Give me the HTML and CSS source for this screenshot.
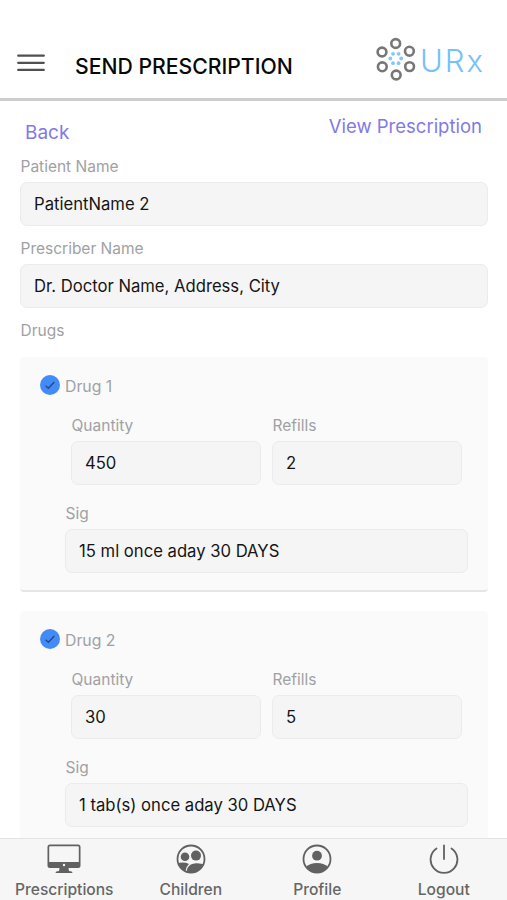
FILE: index.html
```
<!DOCTYPE html>
<html lang="en">
<head>
<meta charset="utf-8">
<title>Send Prescription</title>
<link rel="stylesheet" href="styles.css">
</head>
<body>
<div class="app">
  <header class="header">
    <svg class="menu" viewBox="0 0 28 20"><path d="M1.2 1.7h25.6M1.2 8.8h25.6M1.2 15.9h25.6"/></svg>
    <h1 class="title">SEND PRESCRIPTION</h1>
    <div class="brand">
      <svg class="logo" viewBox="0 0 40 44">
        <g class="outer"><circle cx="19.7" cy="6.5" r="4.4"/><circle cx="33.4" cy="14.2" r="4.4"/><circle cx="33.6" cy="29.6" r="4.4"/><circle cx="20.2" cy="38" r="4.4"/><circle cx="6.3" cy="29.8" r="4.4"/><circle cx="6" cy="15" r="4.4"/></g>
        <g class="inner"><circle cx="17" cy="16.8" r="1.9"/><circle cx="22.6" cy="16.8" r="1.9"/><circle cx="25.2" cy="21.5" r="1.9"/><circle cx="22.6" cy="26.2" r="1.9"/><circle cx="17" cy="26.2" r="1.9"/><circle cx="14.3" cy="21.5" r="1.9"/></g>
      </svg>
      <span class="brand-name">URx</span>
    </div>
  </header>
  <main class="content">
    <nav class="links"><a class="back">Back</a><a class="view">View Prescription</a></nav>
    <div class="field"><label>Patient Name</label><div class="input">PatientName 2</div></div>
    <div class="field"><label>Prescriber Name</label><div class="input">Dr. Doctor Name, Address, City</div></div>
    <label class="drugs">Drugs</label>
    <section class="card">
      <div class="drug"><svg class="check" viewBox="0 0 20 20"><circle cx="10" cy="10" r="10"/><path d="M5.6 10.8 8.4 13.3 14.3 7"/></svg><span>Drug 1</span></div>
      <div class="row">
        <div class="field"><label>Quantity</label><div class="input">450</div></div>
        <div class="field"><label>Refills</label><div class="input">2</div></div>
      </div>
      <div class="field sig"><label>Sig</label><div class="input">15 ml once aday 30 DAYS</div></div>
    </section>
    <section class="card">
      <div class="drug"><svg class="check" viewBox="0 0 20 20"><circle cx="10" cy="10" r="10"/><path d="M5.6 10.8 8.4 13.3 14.3 7"/></svg><span>Drug 2</span></div>
      <div class="row">
        <div class="field"><label>Quantity</label><div class="input">30</div></div>
        <div class="field"><label>Refills</label><div class="input">5</div></div>
      </div>
      <div class="field sig"><label>Sig</label><div class="input">1 tab(s) once aday 30 DAYS</div></div>
    </section>
  </main>
  <footer class="tabs">
    <div class="tab">
      <svg class="desktop" viewBox="0 0 34 30"><path fill-rule="evenodd" d="M3 .5h28a2.500 2.500 0 0 1 2.500 2.500v18.500a2.500 2.500 0 0 1-2.500 2.500H21.500l.5 3q3.500 0 3.500 2H8.500q0-2 3.500-2l.5-3H3A2.500 2.500 0 0 1 .5 21.500V3A2.500 2.500 0 0 1 3 .5ZM3 2.200Q2.200 2.200 2.200 3v15h29.600V3q0-.8-.8-.8Z"/><circle class="hole" cx="17" cy="21" r="1.200"/></svg>
      <span>Prescriptions</span>
    </div>
    <div class="tab">
      <svg viewBox="0 0 30 30"><defs><clipPath id="kids"><circle cx="15" cy="15" r="13.500"/></clipPath></defs><circle class="ring" cx="15" cy="15" r="13.500"/><circle cx="9" cy="12.800" r="4.300"/><circle cx="20" cy="11.600" r="5"/><g clip-path="url(#kids)"><path d="M0 19.500Q8 17.500 13 20q-3 2.500-3.500 7L10 30H0Z"/><path d="M10.500 30q0-4 1-6 2.500-4.500 8.500-4.800 6-.2 10 2.300V30Z"/></g></svg>
      <span>Children</span>
    </div>
    <div class="tab">
      <svg viewBox="0 0 30 30"><defs><clipPath id="user"><circle cx="15" cy="15" r="13.500"/></clipPath></defs><circle class="ring" cx="15" cy="15" r="13.500"/><circle cx="15" cy="11.700" r="4.900"/><path clip-path="url(#user)" d="M4 30v-7q4-4 11-4t11 4v7Z"/></svg>
      <span>Profile</span>
    </div>
    <div class="tab">
      <svg viewBox="0 0 30 30"><path class="ring" stroke-linecap="round" d="M7.500 4.400A13.400 13.400 0 1 0 22.500 4.400M15 1.500v13.500"/></svg>
      <span>Logout</span>
    </div>
  </footer>
</div>
</body>
</html>
```
FILE: styles.css
```
* { box-sizing: border-box; }
body { margin: 0; background: #fff; font-family: Inter, "Liberation Sans", sans-serif; color: #151515; }
.app { display: flex; flex-direction: column; height: 900px; overflow: hidden; }
.header { flex: none; display: flex; align-items: flex-start; height: 101px; padding: 37px 22px 0 17px; border-bottom: 3px solid #cecece; }
.menu { width: 28px; height: 20px; margin-top: 17px; fill: none; stroke: #505050; stroke-width: 2.2; stroke-linecap: round; }
.title { margin: 16px 0 0 30px; font-size: 21.2px; font-weight: 500; line-height: 26px; color: #080808; white-space: nowrap; }
.brand { display: flex; margin-left: auto; }
.logo { width: 40px; height: 44px; }
.outer { fill: none; stroke: #777; stroke-width: 2.6; }
.inner { fill: #82c8fa; }
.brand-name { margin: 5px 0 0 4px; font-family: Inter, sans-serif; font-size: 31px; font-weight: 300; line-height: 38px; letter-spacing: 2px; color: #76c1fa; }
.content { flex: 1; min-height: 0; overflow: hidden; padding: 0 19px 0 20px; }
.links { display: flex; justify-content: space-between; height: 56px; padding: 0 6px 0 5px; color: #8279e7; }
.back { margin-top: 20px; font-size: 19px; line-height: 24px; }
.view { margin-top: 13px; font-size: 18.5px; line-height: 24px; }
.field { margin-bottom: 13px; }
label { display: block; height: 25px; padding-left: 0.5px; font-size: 15.5px; line-height: 20px; color: #a0a1a4; }
.input { height: 44px; padding: 0 13px; border: 1px solid #ebebeb; border-radius: 7px; background: #f5f5f5; font-size: 16.65px; line-height: 42px; white-space: nowrap; }
.drugs { height: 36px; }
.card { height: 235px; margin-bottom: 19px; padding: 18px 20px 0; border-bottom: 2px solid #e6e6e6; border-radius: 4px; background: #fafafa; }
.drug { display: flex; gap: 5px; height: 41px; font-size: 15.8px; line-height: 24px; color: #a0a1a4; }
.check { width: 20px; height: 20px; }
.check circle { fill: #448bfa; }
.check path { fill: none; stroke: #244a83; stroke-width: 1.4; }
.row { display: grid; grid-template-columns: 1fr 1fr; gap: 11px; padding: 0 6px 0 31px; margin-bottom: 19px; }
.row .field { margin: 0; }
.sig { margin: 0 0 0 25px; }
.tabs { flex: none; display: grid; grid-template-columns: repeat(4, 126.5px); height: 62px; padding-left: 1px; border-top: 1px solid #e3e3e3; background: #f6f6f6; }
.tab { display: flex; flex-direction: column; align-items: center; padding-top: 5px; color: #666; font-size: 15.6px; font-weight: 500; line-height: 20px; }
.tab svg { width: 30px; height: 30px; margin-bottom: 6px; fill: #616161; }
.tab .desktop { width: 34px; }
.tab .ring { fill: none; stroke: #616161; stroke-width: 1.8; }
.tab .hole { fill: #f6f6f6; }
```
